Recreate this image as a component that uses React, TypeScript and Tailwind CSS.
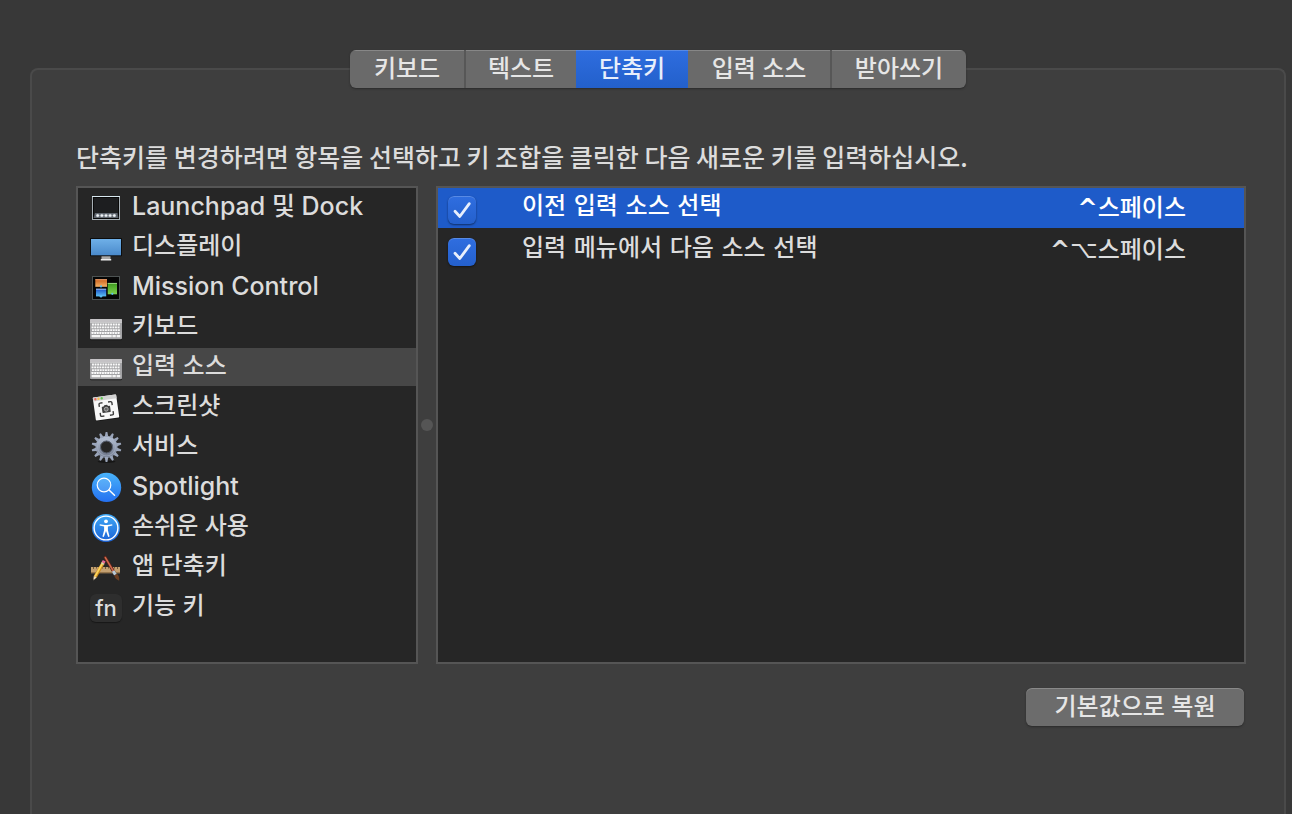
import { useState } from "react";
import type { ReactNode } from "react";

function Svg({ children }: { children: ReactNode }) {
  return (
    <svg viewBox="0 0 32 32" className="size-8 shrink-0" aria-hidden="true">
      {children}
    </svg>
  );
}

function DockIcon() {
  return (
    <Svg>
      <rect x="2" y="5" width="28" height="24" fill="#0b0b0b" />
      <rect x="2.5" y="5.5" width="27" height="23" fill="#1d1e20" stroke="#a8b0b6" />
      <path d="M2 5.500h28" stroke="#d8e8f0" />
      <rect x="3.500" y="6.500" width="25" height="21" fill="none" stroke="#090909" />
      <path d="M5 22h22.500l1 5h-25z" fill="#5c626a" />
      {[7.7, 11.9, 16, 20.1, 24.3].map((x) => (
        <circle key={x} cx={x} cy="24.500" r="1.600" fill="#eef2f6" stroke="#8d949c" strokeWidth="0.400" />
      ))}
    </Svg>
  );
}

function DisplayIcon() {
  return (
    <Svg>
      <defs>
        <linearGradient id="screen" x1="0" y1="0" x2="0" y2="1">
          <stop offset="0" stopColor="#6fb0e8" />
          <stop offset="1" stopColor="#4a8acb" />
        </linearGradient>
      </defs>
      <rect x="0" y="7" width="32" height="18.300" rx="0.800" fill="#0c0c0c" />
      <rect x="1" y="8" width="30" height="16.300" fill="url(#screen)" />
      <path d="M11.500 25.300h9v2.700h-9z" fill="#a9a9a9" />
      <path d="M10.800 28h10.400v1.500H10.800z" fill="#ececec" />
    </Svg>
  );
}

function MissionIcon() {
  return (
    <Svg>
      <defs>
        <linearGradient id="mcOrange" x1="0" y1="0" x2="0" y2="1">
          <stop offset="0" stopColor="#c9601c" />
          <stop offset="1" stopColor="#f5b265" />
        </linearGradient>
        <linearGradient id="mcBlue" x1="0" y1="0" x2="0" y2="1">
          <stop offset="0" stopColor="#1b4fc4" />
          <stop offset="1" stopColor="#5cc0f4" />
        </linearGradient>
        <linearGradient id="mcGreen" x1="0" y1="0" x2="0" y2="1">
          <stop offset="0" stopColor="#3c9a1e" />
          <stop offset="1" stopColor="#7ed24e" />
        </linearGradient>
      </defs>
      <rect x="2.500" y="5.500" width="27" height="23" fill="#050505" stroke="#4c5252" />
      <rect x="5.300" y="8.300" width="11.700" height="7.500" fill="url(#mcOrange)" />
      <path d="M5.300 8.700H17" stroke="#f4a878" strokeWidth="0.900" />
      <rect x="6" y="17.800" width="10.200" height="7.600" fill="url(#mcBlue)" />
      <path d="M6 18.200h10.200" stroke="#b8d0f0" strokeWidth="0.900" />
      <rect x="17.700" y="12" width="9.300" height="11.300" fill="url(#mcGreen)" />
      <path d="M17.700 12.400H27" stroke="#a8dc90" strokeWidth="0.900" />
      <circle cx="11" cy="15.400" r="1.100" fill="#58bdf4" />
      <circle cx="11" cy="25.300" r="1.300" fill="#58bdf4" />
      <circle cx="22.300" cy="22.800" r="1.100" fill="#58bdf4" />
    </Svg>
  );
}

function KeyboardIcon() {
  const rows = [12.6, 15.4, 18.2, 21];
  return (
    <Svg>
      <rect x="0" y="9" width="32" height="20.200" rx="1.500" fill="#141414" />
      <rect x="0" y="8" width="32" height="20.300" rx="1.300" fill="#a4a4a6" />
      <rect x="0" y="8" width="32" height="3.300" rx="1" fill="#c4c2c5" />
      <path d="M0 11.500h32" stroke="#dcdcdc" strokeWidth="0.600" />
      {rows.map((y, r) => (
        <g key={y} fill="#fafafa">
          {Array.from({ length: 11 }, (_, i) => (
            <rect key={i} x={2 + i * 2.6 - (r % 2) * 0.4} y={y} width="1.900" height="1.900" rx="0.200" />
          ))}
        </g>
      ))}
      <path d="M1.600 23.900h8.400v2.400H1.600zM10.700 23.900h11v2.400h-11zM22.400 23.900h3.400v2.400h-3.400zM26.600 23.900h3.600v2.400h-3.600z" fill="#f6f6f6" />
    </Svg>
  );
}

function ScreenshotIcon() {
  return (
    <Svg>
      <g transform="rotate(-8 16 16.500)">
        <rect x="4.200" y="5.300" width="24" height="23.600" rx="0.900" fill="#0d0d0d" opacity="0.700" />
        <rect x="4.200" y="4.800" width="23.600" height="23.400" rx="0.900" fill="#f8f8f8" />
        <path d="M5.100 4.800h21.800q.9 0 .9.900v3H4.200v-3q0-.9.900-.9z" fill="#d2d2d2" />
        <circle cx="6.600" cy="6.800" r="1.200" fill="#ee6a5e" />
        <circle cx="9.800" cy="6.800" r="1.200" fill="#f4c04e" />
        <circle cx="13" cy="6.800" r="1.200" fill="#62c554" />
        <path
          d="M9.500 15v-2.500q0-1.200 1.200-1.200h2.500M18.800 11.300h2.500q1.200 0 1.200 1.200V15M22.500 21v2.500q0 1.200-1.200 1.200h-2.500M13.200 24.700h-2.500q-1.200 0-1.200-1.200V21"
          fill="none"
          stroke="#3c3c3c"
          strokeWidth="1.400"
        />
        <path d="M11.800 16q0-.7.700-.7h1.300l.8-1.300h2.800l.8 1.300h1.300q.7 0 .7.700v4.800q0 .7-.7.700h-7q-.7 0-.7-.7z" fill="#404040" />
        <circle cx="16" cy="18.200" r="2" fill="#6a6a6a" stroke="#d8d8d8" strokeWidth="0.600" />
      </g>
    </Svg>
  );
}

function GearIcon() {
  return (
    <Svg>
      <defs>
        <linearGradient id="gear" x1="0" y1="0" x2="0" y2="1">
          <stop offset="0" stopColor="#b4bfd2" />
          <stop offset="1" stopColor="#737c90" />
        </linearGradient>
      </defs>
      <ellipse cx="16.500" cy="30.600" rx="9" ry="1.200" fill="#151515" />
      <circle cx="16.500" cy="16" r="8.600" fill="none" stroke="url(#gear)" strokeWidth="4.800" />
      <g fill="#9aa5ba">
        {Array.from({ length: 14 }, (_, i) => (
          <path key={i} d="M14.700 6l.9-4.900h1.800l.9 4.900z" transform={`rotate(${(i * 360) / 14} 16.500 16)`} />
        ))}
      </g>
      <circle cx="16.500" cy="16" r="6" fill="none" stroke="#5f687a" strokeWidth="1" />
      <circle cx="16.500" cy="16" r="9" fill="none" stroke="#a9b4c8" strokeWidth="1.200" opacity="0.600" />
    </Svg>
  );
}

function SpotlightIcon() {
  return (
    <Svg>
      <defs>
        <linearGradient id="spot" x1="0" y1="0" x2="0" y2="1">
          <stop offset="0" stopColor="#49b3fa" />
          <stop offset="1" stopColor="#2470f0" />
        </linearGradient>
      </defs>
      <circle cx="16.500" cy="16.400" r="14.700" fill="url(#spot)" />
      <circle cx="14" cy="14" r="6.800" fill="#ffffff22" stroke="#fff" strokeWidth="1.200" />
      <path d="M19 19l5.500 5.300" stroke="#fff" strokeWidth="1.500" strokeLinecap="round" />
    </Svg>
  );
}

function AccessibilityIcon() {
  return (
    <Svg>
      <defs>
        <linearGradient id="acc" x1="0" y1="0" x2="0" y2="1">
          <stop offset="0" stopColor="#3fa9f6" />
          <stop offset="1" stopColor="#1b62d6" />
        </linearGradient>
      </defs>
      <circle cx="16" cy="17" r="14" fill="url(#acc)" />
      <circle cx="16" cy="17" r="11.900" fill="none" stroke="#fff" strokeWidth="1.400" />
      <circle cx="16" cy="10.300" r="1.900" fill="#fff" />
      <path
        d="M9.800 13.300l4.700.6h3l4.700-.6.200 1.300-4.500 1v3.600l1.700 6.300-1.400.4-2.200-5.900-2.200 5.900-1.400-.4 1.700-6.300v-3.600l-4.500-1z"
        fill="#fff"
      />
    </Svg>
  );
}

function AppsIcon() {
  return (
    <Svg>
      <rect x="1" y="16" width="29" height="6.200" fill="#c3a071" />
      <path d="M1 21.700h29" stroke="#8b6c44" />
      <path d="M3.500 16v2M6.500 16v1.500M9.500 16v2M12.500 16v1.500M15.500 16v2M18.500 16v1.500M21.500 16v2M24.500 16v1.500M27.500 16v2" stroke="#5d4728" strokeWidth="0.800" />
      <path d="M15.300 6.500l8.900 15" stroke="#57231a" strokeWidth="3.200" strokeLinecap="round" />
      <path d="M15.300 6.500l8.900 15" stroke="#d0694c" strokeWidth="1.500" strokeLinecap="round" />
      <path d="M23.200 20l2.200 3.800" stroke="#b9cbd8" strokeWidth="3" />
      <path d="M24.200 24.500l2.800-1.700q2.600 2.600 2.200 6.900-4-1.400-5-5.200z" fill="#6b3e22" />
      <path d="M13.300 11.600L5.200 25.800" stroke="#c98a20" strokeWidth="3.400" />
      <path d="M13 11.400L4.900 25.600" stroke="#fbd45c" strokeWidth="1.900" />
      <path d="M3.800 25l2.800 1.600-3.300 3z" fill="#f0dcb8" />
      <path d="M3.400 28.200l1 .6-1.200 1z" fill="#333" />
      <path d="M14.200 9.800l-1.100 2" stroke="#e8679a" strokeWidth="3.200" />
      <path d="M13 12.100l-.5.900" stroke="#c9d3da" strokeWidth="3.200" />
    </Svg>
  );
}

function FnIcon() {
  return (
    <span
      aria-hidden="true"
      className="mt-0.5 flex h-7 w-8 shrink-0 items-center justify-center rounded-md bg-[#2e2e2e] text-[22px] leading-7 shadow-[0_1px_1px_#181818]"
    >
      fn
    </span>
  );
}

const tabs = [
  { name: "키보드", box: "w-[116px] border-r-2" },
  { name: "텍스트", box: "w-[110px]" },
  { name: "단축키", box: "w-[112px]" },
  { name: "입력 소스", box: "w-[144px] border-r-2" },
  { name: "받아쓰기", box: "w-[134px]" },
];

const categories = [
  { name: "Launchpad 및 Dock", latin: true, icon: <DockIcon /> },
  { name: "디스플레이", latin: false, icon: <DisplayIcon /> },
  { name: "Mission Control", latin: true, icon: <MissionIcon /> },
  { name: "키보드", latin: false, icon: <KeyboardIcon /> },
  { name: "입력 소스", latin: false, icon: <KeyboardIcon /> },
  { name: "스크린샷", latin: false, icon: <ScreenshotIcon /> },
  { name: "서비스", latin: false, icon: <GearIcon /> },
  { name: "Spotlight", latin: true, icon: <SpotlightIcon /> },
  { name: "손쉬운 사용", latin: false, icon: <AccessibilityIcon /> },
  { name: "앱 단축키", latin: false, icon: <AppsIcon /> },
  { name: "기능 키", latin: false, icon: <FnIcon /> },
];

const shortcuts = [
  { id: "prev", name: "이전 입력 소스 선택", option: false, keyName: "스페이스" },
  { id: "next", name: "입력 메뉴에서 다음 소스 선택", option: true, keyName: "스페이스" },
];

export default function App() {
  const [tab, setTab] = useState("단축키");
  const [category, setCategory] = useState(4);
  const [row, setRow] = useState("prev");

  return (
    <main className="flex min-h-screen flex-col bg-[#383838] pt-[68px] pr-1.5 pl-[30px] font-['Inter','Noto_Sans_CJK_KR',sans-serif] text-2xl font-medium text-[#dcdcdc]">
      <section className="flex flex-1 flex-col rounded-t-lg border-2 border-b-0 border-[#4a4a4a] bg-[#3e3e3e] pr-[38px] pl-11">
        <div
          role="tablist"
          className="-mt-5 -mr-[38px] -ml-11 flex w-fit self-center overflow-hidden rounded-md bg-[#6a6a6a] shadow-[0_1px_2px_#2a2a2a]"
        >
          {tabs.map((t) => (
            <button
              key={t.name}
              type="button"
              role="tab"
              aria-selected={tab === t.name}
              onClick={() => setTab(t.name)}
              className={`h-[38px] border-[#575757] leading-8 whitespace-nowrap shadow-[inset_0_1px_0_#ffffff33] ${t.box} ${
                tab === t.name ? "bg-linear-to-b from-[#2e6ddf] to-[#2360cb] text-[#e8effb]" : "text-[#e6e6e6]"
              }`}
            >
              {t.name}
            </button>
          ))}
        </div>

        <p className="mt-[52px] font-['Noto_Sans_CJK_KR',sans-serif] text-[25px] leading-8">
          단축키를 변경하려면 항목을 선택하고 키 조합을 클릭한 다음 새로운 키를 입력하십시오.
        </p>

        <div className="mt-3.5 flex">
          <ul className="flex w-[342px] shrink-0 flex-col gap-0.5 border-2 border-[#555] bg-[#262626] pb-9">
            {categories.map((c, i) => (
              <li key={i}>
                <button
                  type="button"
                  onClick={() => setCategory(i)}
                  className={`flex h-[38px] w-full items-center gap-2.5 pl-3 text-left ${category === i ? "bg-[#474747]" : ""}`}
                >
                  {c.icon}
                  <span className={`pb-0.5 leading-8 whitespace-nowrap ${c.latin ? "text-[25px]" : ""}`}>{c.name}</span>
                </button>
              </li>
            ))}
          </ul>

          <div className="flex w-[18px] shrink-0 items-center justify-center">
            <span className="size-3 rounded-full bg-[#555]" />
          </div>

          <div className="min-w-0 flex-1 border-2 border-[#555] bg-[#262626]">
            <table className="w-full border-collapse font-['DejaVu_Sans','Noto_Sans_CJK_KR',sans-serif]">
              <tbody>
                {shortcuts.map((s) => (
                  <tr
                    key={s.id}
                    onClick={() => setRow(s.id)}
                    className={`h-10 border-b-2 border-[#262626] ${row === s.id ? "bg-[#1e5bc9] text-white" : ""}`}
                  >
                    <td className="w-[84px] p-0 pt-1 pl-2.5">
                      <span className="relative block size-7">
                        <input
                          id={s.id}
                          type="checkbox"
                          defaultChecked
                          className="peer block size-7 appearance-none rounded-md bg-[#555] shadow-[inset_0_1px_0_#ffffff33,0_1px_2px_#00000080] checked:bg-linear-to-b checked:from-[#2f6ee0] checked:to-[#2460cc]"
                        />
                        <svg
                          viewBox="0 0 28 28"
                          className="pointer-events-none absolute inset-0 hidden size-7 peer-checked:block"
                          aria-hidden="true"
                        >
                          <path d="M7 15.300l4.800 5.200L21.300 7.700" fill="none" stroke="#e8effc" strokeWidth="2.800" strokeLinecap="round" strokeLinejoin="round" />
                        </svg>
                      </span>
                    </td>
                    <td className="p-0 pb-1">
                      <label htmlFor={s.id} className="block leading-9 whitespace-nowrap">
                        {s.name}
                      </label>
                    </td>
                    <td className="p-0 pr-[58px] text-right leading-9 whitespace-nowrap">
                      <b>^</b>
                      {s.option && "⌥"}
                      {s.keyName}
                    </td>
                  </tr>
                ))}
              </tbody>
            </table>
          </div>
        </div>

        <button
          type="button"
          className="mt-6 mr-0.5 mb-10 h-[38px] w-[218px] self-end rounded-md bg-[#6c6c6c] leading-8 whitespace-nowrap text-[#e6e6e6] shadow-[inset_0_1px_0_#ffffff33,0_1px_2px_#2a2a2a]"
        >
          기본값으로 복원
        </button>
      </section>
    </main>
  );
}
